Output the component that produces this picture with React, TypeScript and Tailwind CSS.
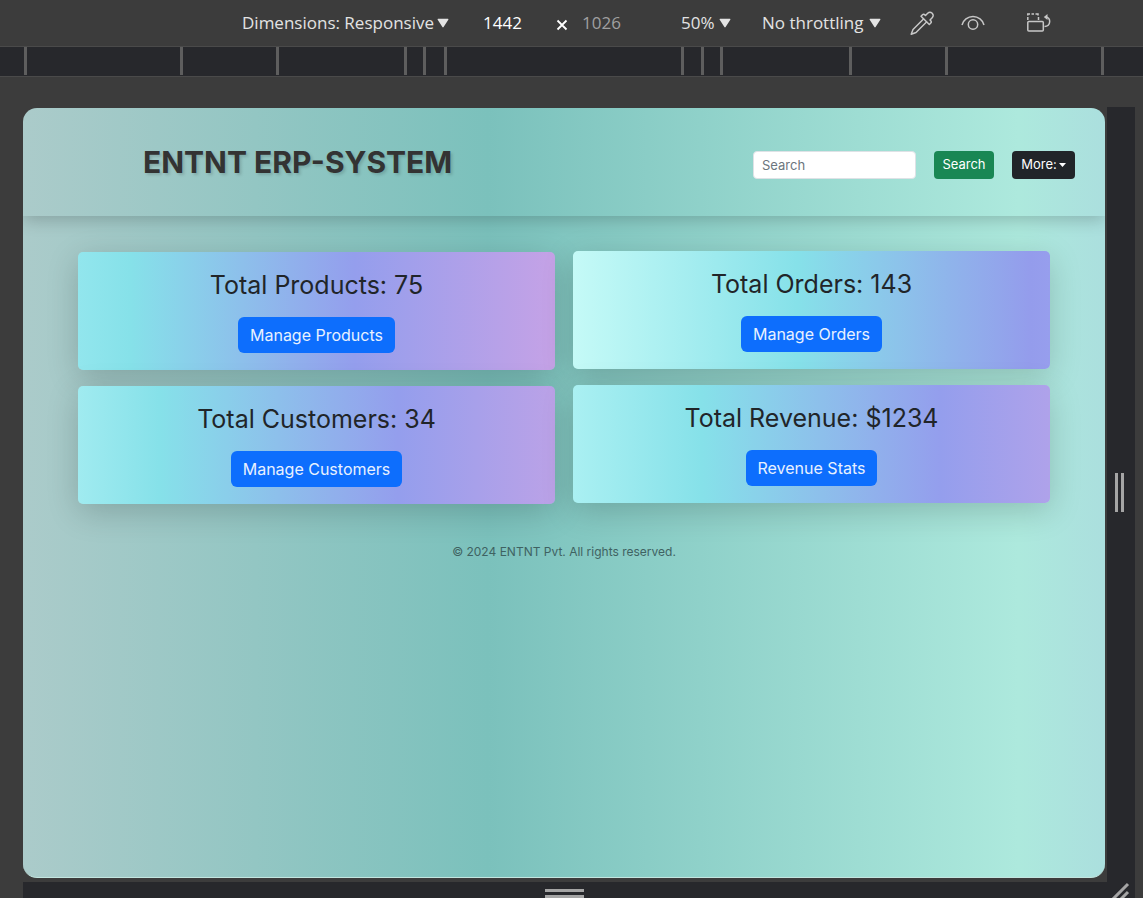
import React from 'react';

const segments = Array.from({ length: 11 }, (_, i) => i);

function Caret() {
  return (
    <svg className="h-2.5 w-3 shrink-0" viewBox="0 0 12 10" fill="#e3e3e3" aria-hidden="true">
      <path d="M1.2.8h9.6a.6.6 0 0 1 .5.9L6.6 9a.7.7 0 0 1-1.2 0L.7 1.700A.6.6 0 0 1 1.200.8z" />
    </svg>
  );
}

function Toolbar() {
  return (
    <header className="flex h-[46px] shrink-0 items-center bg-[#3c3c3c] pl-[242px] text-[17px] text-[#e3e3e3]">
      <button className="flex w-[241px] items-center gap-[3px] whitespace-nowrap">
        Dimensions: Responsive
        <Caret />
      </button>
      <input aria-label="Width" defaultValue="1442" className="w-[63px] bg-transparent text-white outline-none" />
      <span className="flex w-9 pt-1 pl-2.5">
        <svg className="size-3" viewBox="0 0 12 12" stroke="#fff" strokeWidth="1.800" aria-hidden="true">
          <path d="M1.500 1.500l9 9M10.500 1.500l-9 9" />
        </svg>
      </span>
      <input aria-label="Height" defaultValue="1026" className="w-[99px] bg-transparent text-[#a0a0a0] outline-none" />
      <button className="flex w-[81px] items-center gap-1">
        50%
        <Caret />
      </button>
      <button className="flex w-[146px] items-center gap-1.5 whitespace-nowrap">
        No throttling
        <Caret />
      </button>
      <button aria-label="Pick color" className="w-[52px]">
        <svg className="size-7" viewBox="0 0 28 28" fill="none" stroke="#c7c7c7" strokeWidth="1.500" strokeLinejoin="round" strokeLinecap="round" aria-hidden="true">
          <path d="M15.500 10L5 20.500 3.200 25.300 8 23.500 18.500 13" />
          <path d="M13 7.200l8.300 8.300 1.500-1.500c.8-.8.6-1.700-.2-2.400l-.6-.6 2.200-2.200c3-3-1.500-7.500-4.500-4.500l-2.200 2.200-.6-.6c-.8-.8-1.700-.9-2.400-.2z" />
        </svg>
      </button>
      <button aria-label="Vision options" className="w-[66px]">
        <svg className="h-7 w-7" viewBox="0 0 28 28" fill="none" stroke="#c7c7c7" strokeWidth="1.500" aria-hidden="true">
          <path d="M2 16a11.300 11 0 0 1 22 0" />
          <circle cx="13" cy="15.500" r="4.700" />
        </svg>
      </button>
      <button aria-label="Rotate">
        <svg className="h-7 w-7" viewBox="0 0 28 28" fill="none" stroke="#c7c7c7" strokeWidth="1.500" aria-hidden="true">
          <rect x="1.800" y="12.500" width="15.500" height="9.500" rx="1" />
          <path d="M1.800 11V8M1.800 6.500V5h2.200M5.500 5h2.500M9.500 5H12v1.500M12.500 8v3" />
          <path d="M18.500 17.500c6.500 0 7-9.500 1-9.500" />
          <path d="M21.500 5L17.800 8l3.700 3z" fill="#c7c7c7" stroke="none" />
        </svg>
      </button>
    </header>
  );
}

function Ruler() {
  return (
    <div className="shrink-0 border-y border-[#4a4a4a] bg-[#27282c] pr-[39px] pb-px pl-6">
      <div className="grid h-7 grid-cols-[156fr_96fr_128fr_19fr_21fr_237fr_20fr_19fr_129fr_96fr_156fr] border-r-[3px] border-[#5e5e5e]">
        {segments.map((s) => (
          <button key={s} aria-label={`Breakpoint ${s + 1}`} className="border-l-[3px] border-[#5e5e5e]" />
        ))}
      </div>
    </div>
  );
}

type CardProps = { title: string; action: string; tone: string };

function Card({ title, action, tone }: CardProps) {
  return (
    <section className={`flex h-[118px] flex-col items-center rounded-[5px] pt-[15px] shadow-[0_8px_32px_rgba(0,0,0,0.18)] ${tone}`}>
      <h2 className="text-[25px] leading-9 text-[#212529]">{title}</h2>
      <button className="mt-3.5 h-9 rounded-md bg-[#0d6efd] px-3 pb-px text-base text-[#e8f1ff]">{action}</button>
    </section>
  );
}

function Dashboard() {
  return (
    <div className="flex min-w-0 flex-1 flex-col overflow-hidden rounded-[14px] border-b border-[#c3e6e0] bg-[linear-gradient(to_right,#abcbca,#7bc1bc_43%,#ade9dd_92%,#abdfde)] font-[Inter,sans-serif]">
      <nav className="flex h-[108px] shrink-0 items-center justify-between pr-[30px] pl-[120px] shadow-[0_4px_16px_rgba(0,0,0,0.2)]">
        <h1 className="text-3xl font-bold text-[#333] [text-shadow:2px_2px_3px_rgba(0,0,0,0.15)]">ENTNT ERP-SYSTEM</h1>
        <form className="flex items-center gap-[18px] pt-1.5 text-[13px]" onSubmit={(e) => e.preventDefault()}>
          <input aria-label="Search" placeholder="Search" className="h-7 w-[163px] rounded border border-[#dee2e6] bg-white px-2 outline-none placeholder:text-[#6c757d]" />
          <button className="h-7 w-[60px] rounded bg-[#198754] text-white">Search</button>
          <button type="button" className="flex h-7 w-[63px] items-center justify-center gap-0.5 rounded bg-[#212529] text-white">
            More:
            <svg className="h-1 w-[7px]" viewBox="0 0 7 4" fill="#fff" aria-hidden="true"><path d="M0 0h7L3.500 4z" /></svg>
          </button>
        </form>
      </nav>
      <main className="grid grid-cols-2 gap-x-[18px] px-[55px] pt-[35px]">
        <div className="flex flex-col gap-4 pt-px">
          <Card title="Total Products: 75" action="Manage Products" tone="bg-[linear-gradient(to_right,#92e6ed,#86e1e9_11%,#949eed_58%,#c5a2e6)]" />
          <Card title="Total Customers: 34" action="Manage Customers" tone="bg-[linear-gradient(to_right,#a0ebf0,#86e1e9_17%,#949eed_67%,#bba2e7)]" />
        </div>
        <div className="flex flex-col gap-4">
          <Card title="Total Orders: 143" action="Manage Orders" tone="bg-[linear-gradient(to_right,#c5faf7,#86e1e9_47%,#949cec_96%,#979eed)]" />
          <Card title="Total Revenue: $1234" action="Revenue Stats" tone="bg-[linear-gradient(to_right,#aaf0f2,#86e1e9_27%,#949eed_77%,#afa2ea)]" />
        </div>
      </main>
      <footer className="pt-10 text-center text-xs leading-4 text-[#3f6262]">© 2024 ENTNT Pvt. All rights reserved.</footer>
    </div>
  );
}

export default function App() {
  return (
    <div className="flex h-screen flex-col overflow-hidden bg-[#3c3c3c] font-['Open_Sans',sans-serif]">
      <Toolbar />
      <Ruler />
      <div className="flex min-h-0 flex-1 flex-col pt-[30px] pr-2 pl-[23px]">
        <div className="flex min-h-0 flex-1 gap-0.5">
          <div className="flex min-w-0 flex-1 pt-px pb-1">
            <Dashboard />
          </div>
          <div className="flex w-7 items-center justify-center gap-[3px] bg-[#27282c] pr-1 pb-1">
            <span className="h-[39px] w-[3px] bg-[#a5a5a5]" />
            <span className="h-[39px] w-[3px] bg-[#a5a5a5]" />
          </div>
        </div>
        <div className="flex h-4 shrink-0 bg-[#27282c]">
          <div className="flex flex-1 flex-col items-center gap-[3px] pt-[7px] pr-0.5">
            <span className="h-[3px] w-[39px] bg-[#a5a5a5]" />
            <span className="h-[3px] w-[39px] bg-[#a5a5a5]" />
          </div>
          <svg className="h-4 w-7" viewBox="0 0 28 16" stroke="#a5a5a5" strokeWidth="3" aria-hidden="true">
            <path d="M5 18L21 2M13 18l8-8" />
          </svg>
        </div>
      </div>
    </div>
  );
}
